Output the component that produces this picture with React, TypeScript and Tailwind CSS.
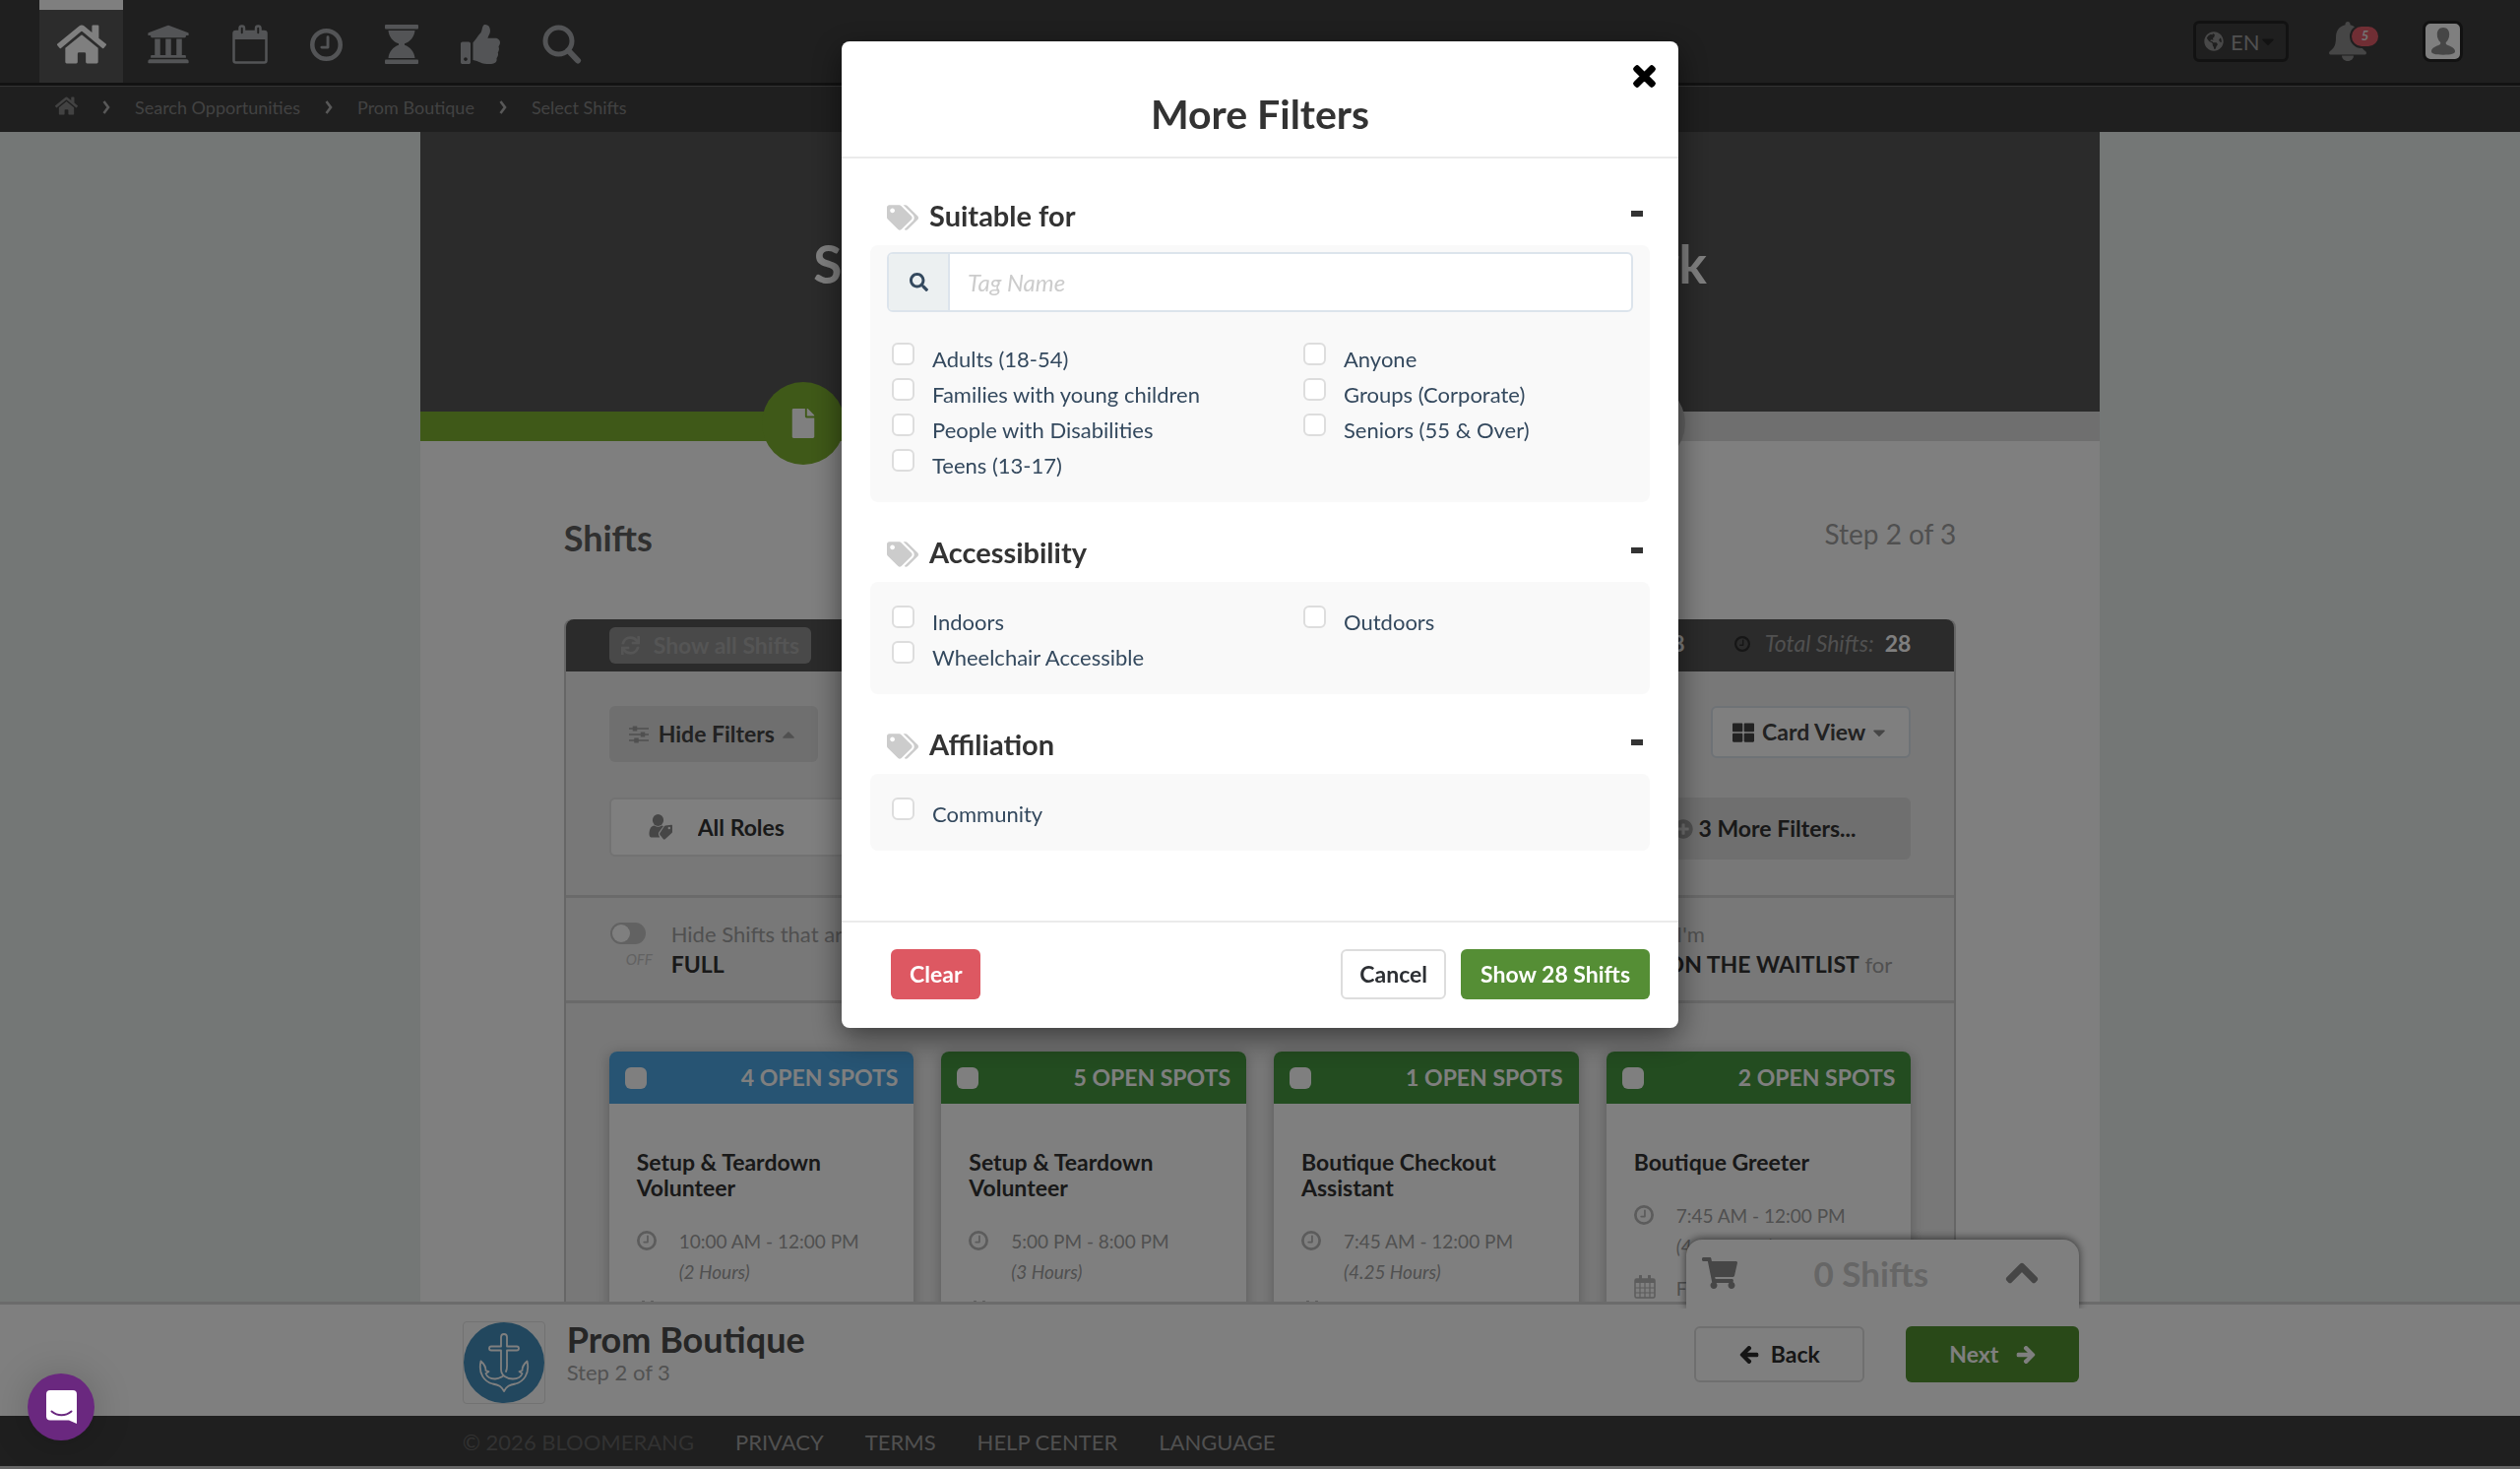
import { useState, type ReactNode } from "react";
import {
  FaArrowLeft,
  FaArrowRight,
  FaCaretDown,
  FaCaretUp,
  FaChevronUp,
  FaFile,
  FaGlobeAmericas,
  FaHome,
  FaPlusCircle,
  FaSearch,
  FaShoppingCart,
  FaSync,
  FaTags,
  FaThLarge,
  FaThumbsUp,
  FaTimes,
  FaUniversity,
} from "react-icons/fa";

const CalendarIcon = () => (
  <svg viewBox="0 0 36 40" className="h-10 w-9" fill="none" stroke="currentColor" aria-hidden="true">
    <rect x="1.5" y="7" width="33" height="31.5" rx="2" strokeWidth="2.5" />
    <path d="M1.5 11h33" strokeWidth="8" />
    <rect x="7.5" y="1.5" width="4.5" height="9" rx="2.2" fill="#3e3e3e" strokeWidth="2.5" />
    <rect x="24" y="1.5" width="4.5" height="9" rx="2.2" fill="#3e3e3e" strokeWidth="2.5" />
  </svg>
);

const ClockIcon = ({ className }: { className: string }) => (
  <svg viewBox="0 0 32 32" className={className} fill="none" stroke="currentColor" aria-hidden="true">
    <circle cx="16" cy="16" r="13.8" strokeWidth="4.4" />
    <path d="M17.5 8.5v10h-6" strokeWidth="2.8" strokeLinecap="round" strokeLinejoin="round" />
  </svg>
);

const HourglassIcon = () => (
  <svg viewBox="0 0 34 40" className="h-10 w-[34px]" fill="currentColor" aria-hidden="true">
    <rect width="34" height="4.5" rx="1" />
    <rect y="35.5" width="34" height="4.5" rx="1" />
    <path d="M3.5 6h27c-.5 6.500-5 11.500-10.500 13.300v1.400C25.500 22.500 30 27.500 30.500 34h-27C4 27.500 8.500 22.500 14 20.700v-1.400C8.500 17.500 4 12.500 3.500 6z" />
  </svg>
);

const MagnifierIcon = () => (
  <svg viewBox="0 0 40 40" className="size-10" fill="none" stroke="currentColor" aria-hidden="true">
    <circle cx="16.500" cy="16.500" r="13.500" strokeWidth="5" />
    <path d="M26.500 26.500L36 36.500" strokeWidth="6" strokeLinecap="round" />
  </svg>
);

const BellIcon = () => (
  <svg viewBox="0 0 38 40" className="h-10 w-[38px]" fill="currentColor" aria-hidden="true">
    <path d="M19 0c1.500 0 2.500 1 2.500 2.400v.8C28 4.500 31 9.500 31 16c0 8 2 11 6.300 14.200.9.700 1.100 2.800-.6 3.300H1.300c-1.700-.5-1.500-2.600-.6-3.300C5 27 7 24 7 16 7 9.500 10 4.500 16.500 3.200v-.8C16.500 1 17.500 0 19 0z" />
    <path d="M13 34.500h12c0 3-2.500 5.500-6 5.500s-6-2.500-6-5.500z" />
  </svg>
);

const PersonIcon = () => (
  <svg viewBox="0 0 24 28" className="h-7 w-6" fill="currentColor" aria-hidden="true">
    <path d="M12 0c4 0 6.200 2.800 6.200 7 0 3.400-1.500 6.300-3.200 7.800-.6.600-.3 2 .4 2.400 3.600 1.800 8.600 3 8.600 6.900 0 2.600-3.500 3.600-12 3.600S0 26.700 0 24.100c0-3.900 5-5.100 8.600-6.900.7-.4 1-1.800.4-2.400C7.300 13.300 5.800 10.400 5.800 7 5.800 2.800 8 0 12 0z" />
  </svg>
);

const SlidersIcon = () => (
  <svg viewBox="0 0 20 18" className="h-[18px] w-5" stroke="currentColor" aria-hidden="true">
    <path d="M0 3h20M0 9h20M0 15h20" strokeWidth="1.6" />
    <path d="M6 .5v5M14 6.500v5M7.500 12.500v5" strokeWidth="4.500" />
  </svg>
);

const RoleIcon = () => (
  <svg viewBox="0 0 24 26" className="mr-[26px] h-[26px] w-6 text-[#8c8c8c]" fill="currentColor" aria-hidden="true">
    <ellipse cx="9.500" cy="6" rx="5.600" ry="6" />
    <path d="M1 16c1-3.500 3-4.500 5-4.500 2 1.600 5 1.600 7 0 1 0 1.500.2 2 .6l-4.500 6c-.8 1.200-.8 2.600 0 3.800l.8 1.600H2.500C.5 23 0 20 1 16z" />
    <path d="M17 11.500l6-.8c.6 0 1 .3 1 1v6.100c0 .5-.2.900-.5 1.300l-6.800 6.200c-.6.600-1.300.6-1.800 0l-3.500-4.400c-.5-.6-.5-1.200 0-1.800l4.600-7c.3-.4.6-.5 1-.6zm3.800 1.300a1.200 1.200 0 1 0 0 2.400 1.200 1.200 0 0 0 0-2.400z" fillRule="evenodd" />
  </svg>
);

const GridCalendarIcon = () => (
  <svg viewBox="0 0 22 24" className="h-6 w-[22px]" fill="none" stroke="currentColor" aria-hidden="true">
    <rect x="1" y="4" width="20" height="19" rx="1.500" strokeWidth="1.500" />
    <path d="M1 6h20" strokeWidth="4" />
    <path d="M1 13h20M1 18h20M6 8v15M11 8v15M16 8v15" strokeWidth="1.200" />
    <path d="M6.500 1v5M15.500 1v5" strokeWidth="3" strokeLinecap="round" />
  </svg>
);

const AnchorLogo = () => (
  <svg viewBox="0 0 82 82" className="size-[82px]" fill="none" aria-hidden="true">
    <circle cx="41" cy="41" r="41" fill="#458fbc" />
    <g stroke="#fff" strokeWidth="1.800" strokeLinejoin="round" strokeLinecap="round">
      <path d="M43 50c1.500-3 1-6 1-9V28.500h10a2 2 0 0 0 0-4H44V15a3 3 0 0 0-6 0v9.500H28a2 2 0 0 0 0 4h10V48c0 6 6 9.500 12 9.500 4 0 8-1.500 9.500-5.500l-3-2 3-1c0-5 2-7 5-9.500 3 13-4 21-12 23-6 1-9 2.500-11.500 7.500-2.500-5-5.500-6.500-11.500-7.500-8-2-15-10-12-23 3 2.500 5 4.500 5 9.500l3 1-3 2c1.500 4 5.500 5.500 9.500 5.500 3 0 5-1 7.500-2.500" />
    </g>
  </svg>
);

const ChatIcon = () => (
  <svg viewBox="0 0 31 34" className="h-[34px] w-[31px]" aria-hidden="true">
    <path d="M4 0h23a4 4 0 0 1 4 4v30l-8-3.500H4a4 4 0 0 1-4-4V4a4 4 0 0 1 4-4z" fill="#fff" />
    <path d="M5.500 21.500c6 5 14 5 20 0" fill="none" stroke="#6a287f" strokeWidth="2" strokeLinecap="round" />
  </svg>
);

const Chevron = () => (
  <svg viewBox="0 0 8 14" className="h-[14px] w-2 text-[#b0b0b0]" fill="none" stroke="currentColor" aria-hidden="true">
    <path d="M1.500 1l4.500 6-4.500 6" strokeWidth="2.600" />
  </svg>
);

const navItems: { label: string; icon: ReactNode }[] = [
  { label: "Organization", icon: <FaUniversity className="size-11" /> },
  { label: "Calendar", icon: <CalendarIcon /> },
  { label: "Hours", icon: <ClockIcon className="size-[33px]" /> },
  { label: "History", icon: <HourglassIcon /> },
  { label: "Recognition", icon: <FaThumbsUp className="size-10" /> },
  { label: "Search", icon: <MagnifierIcon /> },
];

const crumbs = ["Search Opportunities", "Prom Boutique", "Select Shifts"];

function TopBar() {
  return (
    <header className="shrink-0 bg-[#3e3e3e] text-[#a6a9ac]">
      <div className="flex h-[87px] items-stretch border-b-3 border-[#242424] pl-10 pr-[58px]">
        <a href="#home" aria-label="Home" className="flex w-[85px] items-center justify-center border-t-10 border-white bg-[#585858] pb-1 text-white">
          <FaHome className="size-[50px]" />
        </a>
        <nav className="ml-6 flex items-center gap-[43px] pt-1.5">
          {navItems.map((n) => (
            <a key={n.label} href="#nav" aria-label={n.label}>
              {n.icon}
            </a>
          ))}
        </nav>
        <div className="ml-auto flex items-center">
          <label className="flex h-[42px] items-center rounded-md border-3 border-[#242424] px-2">
            <FaGlobeAmericas className="size-5 text-[#909090]" />
            <select aria-label="Language" className="ml-[7px] w-[28px] appearance-none text-[22px] text-[#a0a0a0]">
              <option>EN</option>
            </select>
            <FaCaretDown className="size-5 text-[#242424]" />
          </label>
          <button aria-label="Notifications" className="relative ml-[41px] text-[#8c8c8c]">
            <BellIcon />
            <span className="absolute left-[21px] top-[3px] flex h-6 w-[31px] items-center justify-center rounded-full border-2 border-[#3e3e3e] bg-[#e05c68] text-[13px] font-bold italic text-[#e8e8e8]">
              5
            </span>
          </button>
          <button aria-label="Account" className="ml-[57px] flex h-[42px] w-[41px] items-center justify-center rounded-lg border-3 border-[#242424] bg-white text-[#8c8c8c]">
            <PersonIcon />
          </button>
        </div>
      </div>
      <nav aria-label="Breadcrumb" className="flex h-[47px] items-center gap-[25px] border-t border-[#666] pb-1 pl-14 text-[18px] text-[#858585]">
        <a href="#home" aria-label="Home" className="pb-1">
          <FaHome className="size-[23px]" />
        </a>
        {crumbs.map((c) => (
          <span key={c} className="flex items-center gap-[25px]">
            <Chevron />
            <a href="#crumb">{c}</a>
          </span>
        ))}
      </nav>
    </header>
  );
}

type Shift = { spots: number; color: string; title: string; time: string; hours: string };

const shifts: Shift[] = [
  { spots: 4, color: "bg-[#4ea8e6]", title: "Setup & Teardown Volunteer", time: "10:00 AM - 12:00 PM", hours: "(2 Hours)" },
  { spots: 5, color: "bg-[#469840]", title: "Setup & Teardown Volunteer", time: "5:00 PM - 8:00 PM", hours: "(3 Hours)" },
  { spots: 1, color: "bg-[#469840]", title: "Boutique Checkout Assistant", time: "7:45 AM - 12:00 PM", hours: "(4.25 Hours)" },
  { spots: 2, color: "bg-[#469840]", title: "Boutique Greeter", time: "7:45 AM - 12:00 PM", hours: "(4.25 Hours)" },
];

function ShiftCard({ shift }: { shift: Shift }) {
  return (
    <article className="rounded-lg bg-white pb-10 shadow-[0_2px_14px_rgba(0,0,0,0.25)]">
      <label className={`flex h-[53px] items-center justify-between rounded-t-lg px-4 text-[23px] font-bold text-white ${shift.color}`}>
        <input type="checkbox" className="size-[22px] appearance-none rounded-md bg-white" />
        {shift.spots} OPEN SPOTS
      </label>
      <div className="px-7 pt-[46px]">
        <h3 className="text-[23px]/[26px] font-bold text-[#333]">{shift.title}</h3>
        <div className="mt-[26px] flex text-[19px]/[31px] text-[#a0a0a0]">
          <ClockIcon className="mr-[23px] mt-[5px] size-5 text-[#b8b8b8]" />
          <p>
            {shift.time}
            <br />
            <em>{shift.hours}</em>
          </p>
        </div>
        <div className="mt-3 flex text-[19px]/[31px] text-[#a0a0a0]">
          <span className="mr-[21px] mt-0.5 text-[#b8b8b8]">
            <GridCalendarIcon />
          </span>
          Fri, Mar 13
        </div>
      </div>
    </article>
  );
}

function Toggle({ lead, strong, tail, mid }: { lead: string; mid?: string; strong: string; tail?: string }) {
  return (
    <label className="flex text-[22px]/[31px] text-[#a0a0a0]">
      <span className="w-[62px] pt-1">
        <span className="flex h-[22px] w-9 items-center rounded-full bg-[#c4c4c4] px-0.5">
          <input type="checkbox" role="switch" className="size-[18px] appearance-none rounded-full bg-white" />
        </span>
        <span className="block pl-4 text-[15px] italic text-[#c4c4c4]">OFF</span>
      </span>
      <span>
        {lead}
        <br />
        {mid && <span className="mr-3.5">{mid}</span>}
        <b className="text-[23px] text-[#333]">{strong}</b> {tail}
      </span>
    </label>
  );
}

function Page() {
  return (
    <main className="min-h-0 flex-1 overflow-hidden bg-[#e8eeec]">
      <div className="mx-auto w-2/3 bg-white">
        <div className="flex h-[284px] items-center justify-center bg-[#565656] pb-[17px] text-[53px] font-bold text-white">
          <h1>Select Which Shifts You Want To Work</h1>
        </div>
        <div className="flex h-[30px] items-center bg-[#dedede]">
          <div className="flex h-[30px] w-1/4 items-center justify-end bg-[#7eb230]">
            <span className="-mr-[5px] mb-[6px] flex size-[84px] shrink-0 items-center justify-center rounded-full bg-[#7eb230] text-white">
              <FaFile className="size-[30px]" />
            </span>
          </div>
          <div className="h-[30px] w-1/4 bg-[#7eb230]" />
          <div className="flex w-1/4 items-center justify-end">
            <span className="-mr-[5px] mb-[6px] size-[84px] shrink-0 rounded-full bg-[#c4c4c4]" />
          </div>
        </div>
        <section className="px-[146px] pt-[72px]">
          <div className="flex items-start justify-between">
            <h2 className="text-[36px]/[52px] font-bold text-[#606060]">Shifts</h2>
            <span className="text-[28px]/[44px] text-[#a0a0a0]">Step 2 of 3</span>
          </div>
          <div className="mt-[57px] rounded-t-lg border-2 border-t-0 border-[#ccc] bg-[#f0f0f0]">
            <div className="flex h-[53px] items-center rounded-t-lg bg-[#565656] px-11 pb-1 text-[23px] text-[#a0a0a0]">
              <button disabled className="mt-1 flex h-[37px] items-center gap-3.5 rounded-md bg-[#929292] px-3 font-bold text-[#aaa]">
                <FaSync className="size-[19px]" />
                Show all Shifts
              </button>
              <span className="ml-auto mr-[50px] flex gap-3">
                <em>Open Shifts:</em> <b className="text-white">28</b>
              </span>
              <ClockIcon className="mr-[15px] size-4 text-[#2c2c2c]" />
              <em className="mr-[11px]">Total Shifts:</em> <b className="text-white">28</b>
            </div>
            <div className="flex items-start px-11 pt-[35px] text-[23px] font-bold text-[#444]">
              <button className="flex h-[57px] items-center rounded-md bg-[#dedede] px-5">
                <span className="mr-2.5 text-[#a0a0a0]">
                  <SlidersIcon />
                </span>
                Hide Filters
                <FaCaretUp className="ml-1 size-5 text-[#a0a0a0]" />
              </button>
              <button className="ml-auto mr-8 h-[53px] rounded-md border-2 border-[#dce4ec] bg-white px-6">List View</button>
              <button aria-haspopup="menu" className="flex h-[53px] items-center rounded-md border-2 border-[#dce4ec] bg-white px-5">
                <FaThLarge className="mr-2 size-[22px]" />
                Card View
                <FaCaretDown className="ml-1 size-5 text-[#8c8c8c]" />
              </button>
            </div>
            <div className="grid grid-cols-4 gap-7 px-11 pb-9 pt-9 text-[23px] font-bold text-[#333]">
              <label className="flex h-[60px] items-center rounded-md border-2 border-[#e4e4e4] bg-white pl-[38px]">
                <RoleIcon />
                <select aria-label="Roles" className="w-40 appearance-none">
                  <option>All Roles</option>
                </select>
              </label>
              <span />
              <span />
              <button className="flex h-[63px] items-center justify-center gap-1.5 rounded-md bg-[#dedede] pl-3">
                <FaPlusCircle className="size-5 text-[#a0a0a0]" />3 More Filters...
              </button>
            </div>
            <div className="grid grid-cols-3 border-y-3 border-[#d4d4d4] py-[21px] pl-[45px]">
              <Toggle lead="Hide Shifts that are" strong="FULL" />
              <Toggle lead="Hide Shifts that" mid="are" strong="OVER" />
              <Toggle lead="Hide Shifts I'm" mid="currently" strong="ON THE WAITLIST" tail="for" />
            </div>
            <div className="grid grid-cols-4 items-start gap-7 px-11 pt-[49px]">
              {shifts.map((s, i) => (
                <ShiftCard key={i} shift={s} />
              ))}
            </div>
          </div>
        </section>
      </div>
    </main>
  );
}

function BottomBar() {
  return (
    <div className="relative shrink-0 border-t-3 border-[#d6d6d6] bg-white">
      <div className="relative mx-auto flex w-2/3 items-start pb-3 pl-[43px] pr-[21px] pt-[17px]">
        <button className="absolute -top-[66px] right-[21px] flex h-[70px] w-[399px] items-center rounded-t-2xl bg-white pb-0.5 pl-4 pr-10 text-[#8c8c8c] shadow-[0_-1px_8px_rgba(0,0,0,0.6)] [clip-path:inset(-12px_-12px_0_-12px)]">
          <FaShoppingCart className="size-9" />
          <span className="mx-auto text-[35px] font-bold text-[#ccc]">0 Shifts</span>
          <FaChevronUp className="size-9" stroke="currentColor" strokeWidth="24" />
        </button>
        <div className="rounded border border-[#e4e4e4]">
          <AnchorLogo />
        </div>
        <div className="-mt-0.5 ml-[22px]">
          <div className="text-[36px]/[40px] font-bold text-[#4c4c4c]">Prom Boutique</div>
          <div className="text-[22px]/[27px] text-[#a4a4a4]">Step 2 of 3</div>
        </div>
        <div className="ml-auto flex gap-[42px] pt-[5px] text-[23px] font-bold">
          <button className="flex h-[57px] w-[173px] items-center justify-center gap-3 rounded-md border-2 border-[#dedede] text-[#2c2c2c]">
            <FaArrowLeft className="size-5" stroke="currentColor" strokeWidth="30" />
            Back
          </button>
          <button className="flex h-[57px] w-[176px] items-center justify-center gap-[18px] rounded-md bg-[#529230] text-white">
            Next
            <FaArrowRight className="size-5" stroke="currentColor" strokeWidth="30" />
          </button>
        </div>
      </div>
    </div>
  );
}

function Footer() {
  return (
    <footer className="shrink-0 border-b-3 border-[#ccc] bg-[#3e3e3e]">
      <div className="mx-auto flex h-[51px] w-2/3 items-center gap-[42px] pl-[43px] pt-0.5 text-[22px] text-[#a0a0a0]">
        <span className="text-[#646464]">© 2026 BLOOMERANG</span>
        <a href="#privacy">PRIVACY</a>
        <a href="#terms">TERMS</a>
        <a href="#help">HELP CENTER</a>
        <a href="#language">LANGUAGE</a>
      </div>
    </footer>
  );
}

const groups = [
  {
    title: "Suitable for",
    searchable: true,
    options: [
      "Adults (18-54)",
      "Anyone",
      "Families with young children",
      "Groups (Corporate)",
      "People with Disabilities",
      "Seniors (55 & Over)",
      "Teens (13-17)",
    ],
  },
  { title: "Accessibility", searchable: false, options: ["Indoors", "Outdoors", "Wheelchair Accessible"] },
  { title: "Affiliation", searchable: false, options: ["Community"] },
];

function FilterGroup({ title, searchable, options }: { title: string; searchable: boolean; options: string[] }) {
  const [open, setOpen] = useState(true);
  return (
    <section>
      <h3 className="h-[81px] pt-[22px]">
        <button
          aria-expanded={open}
          onClick={() => setOpen(!open)}
          className="flex h-[58px] w-full items-center pl-[17px] pr-[7px] text-[29px] font-bold text-[#333]"
        >
          <FaTags className="mr-[11px] mt-1 size-8 text-[#ccc]" />
          {title}
          <span className="mb-1 ml-auto h-1.5 w-3 bg-[#333]" />
        </button>
      </h3>
      {open && (
        <div className={`rounded-lg bg-[#f9f9f9] pb-5 ${searchable ? "pt-[7px]" : "pt-[22px]"}`}>
          {searchable && (
            <label className="mx-[17px] mb-[29px] flex h-[61px] overflow-hidden rounded-md border-2 border-[#dce4ec] bg-white">
              <span className="flex w-[62px] items-center justify-center border-r-2 border-[#dce4ec] bg-[#ecf0f1] text-[#34495e]">
                <FaSearch className="size-[19px]" />
              </span>
              <input
                type="text"
                aria-label="Tag Name"
                placeholder="Tag Name"
                className="min-w-0 flex-1 px-[18px] text-[24px] outline-none placeholder:italic placeholder:text-[#ccc]"
              />
            </label>
          )}
          <div className="grid grid-cols-[418px_1fr] pl-[22px]">
            {options.map((o) => (
              <label key={o} className="flex h-9 items-center text-[22px] text-[#34495e]">
                <input
                  type="checkbox"
                  className="mb-2.5 mr-[18px] size-[23px] appearance-none rounded-md border-2 border-[#ddd] bg-white checked:bg-[#558e35]"
                />
                {o}
              </label>
            ))}
          </div>
        </div>
      )}
    </section>
  );
}

function FilterDialog() {
  return (
    <div className="fixed inset-0 flex items-start justify-center bg-black/50 pt-[42px]">
      <div
        role="dialog"
        aria-modal="true"
        aria-labelledby="filters-title"
        className="relative w-[850px] rounded-lg bg-white shadow-[0_10px_30px_rgba(0,0,0,0.5)]"
      >
        <button aria-label="Close" className="absolute right-[19px] top-5 text-black">
          <FaTimes className="size-[31px]" stroke="currentColor" strokeWidth="24" />
        </button>
        <div className="border-b-2 border-[#ebebeb] pb-[17px] pt-12">
          <h2 id="filters-title" className="text-center text-[41px]/[52px] font-bold text-[#333]">
            More Filters
          </h2>
        </div>
        <div className="px-[29px] pb-[71px] pt-[7px]">
          {groups.map((g) => (
            <FilterGroup key={g.title} {...g} />
          ))}
        </div>
        <div className="flex items-center gap-[15px] border-t-2 border-[#ebebeb] pb-[29px] pl-[50px] pr-[29px] pt-[27px] text-[23px] font-bold">
          <button className="mr-auto h-[51px] rounded-md bg-[#dd5862] px-[19px] text-white">Clear</button>
          <button className="h-[51px] rounded-md border-2 border-[#ddd] bg-white px-[17px] text-[#2c2f33]">Cancel</button>
          <button className="h-[51px] rounded-md bg-[#558e35] px-5 text-white">Show 28 Shifts</button>
        </div>
      </div>
    </div>
  );
}

export default function App() {
  return (
    <div className="flex h-screen flex-col overflow-hidden font-['Lato',sans-serif]">
      <TopBar />
      <Page />
      <BottomBar />
      <Footer />
      <FilterDialog />
      <button
        aria-label="Open chat"
        className="fixed bottom-[29px] left-7 flex size-[68px] items-center justify-center rounded-full bg-[#6a287f] shadow-[0_2px_40px_rgba(0,0,0,0.2)]"
      >
        <ChatIcon />
      </button>
    </div>
  );
}
